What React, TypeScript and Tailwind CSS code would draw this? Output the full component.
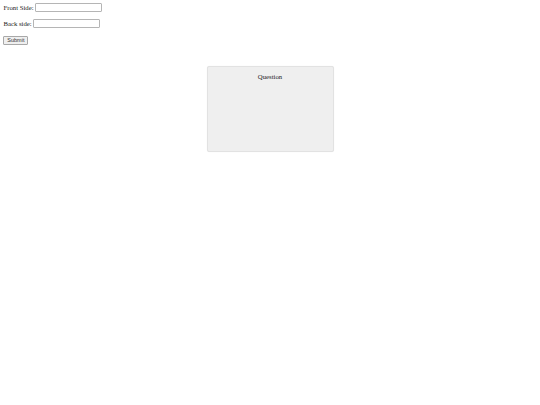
export default function App() {
    return (
        <div className="min-h-[405px] bg-white p-[3.4px] text-[6.75px] leading-[8px] text-[#222]" style={{ fontFamily: '"Liberation Serif", serif' }}>
            <form className="flex flex-col" onSubmit={(e) => e.preventDefault()}>
                <div className="flex items-center h-[9px]">
                    <label htmlFor="front" className="mr-[1px]">Front Side:</label>
                    <input id="front" type="text" className="w-[67px] h-[9px] border border-[#b5b5b5] rounded-[1px] bg-white" />
                </div>
                <div className="flex items-center h-[9px] mt-[7px]">
                    <label htmlFor="back" className="mr-[1px]">Back side:</label>
                    <input id="back" type="text" className="w-[67px] h-[9px] border border-[#b5b5b5] rounded-[1px] bg-white" />
                </div>
                <div className="mt-[8px]">
                    <button
                        type="submit"
                        className="h-[9px] w-[25px] border border-[#a8a8a8] rounded-[1px] bg-[#efefef] text-[5.5px] leading-[7px] text-[#333]"
                        style={{ fontFamily: '"Liberation Sans", sans-serif' }}
                    >
                        Submit
                    </button>
                </div>
            </form>

            {/* Card */}
            <div className="mx-auto mt-[21px] w-[127px] h-[86px] bg-[#efefef] border border-[#e2e2e2] rounded-[2px] shadow-[0_0_1px_rgba(0,0,0,0.08)] flex flex-col items-center pt-[6px]">
                <p className="text-[6.75px] leading-[8px]">Question</p>
            </div>
        </div>
    );
}
